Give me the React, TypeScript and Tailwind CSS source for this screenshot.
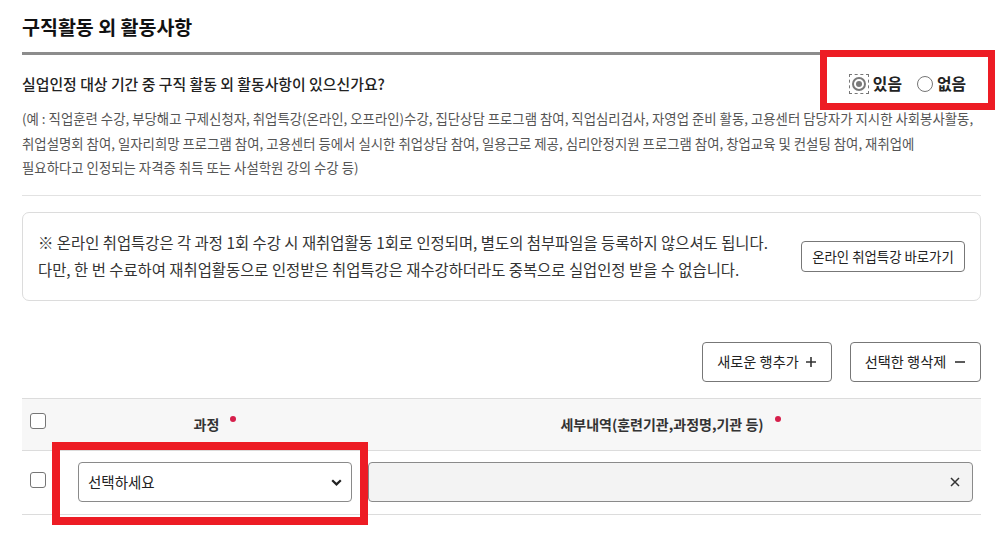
import React from "react";

const descLines = [
  "(예 : 직업훈련 수강, 부당해고 구제신청자, 취업특강(온라인, 오프라인)수강, 집단상담 프로그램 참여, 직업심리검사, 자영업 준비 활동, 고용센터 담당자가 지시한 사회봉사활동,",
  "취업설명회 참여, 일자리희망 프로그램 참여, 고용센터 등에서 실시한 취업상담 참여, 일용근로 제공, 심리안정지원 프로그램 참여, 창업교육 및 컨설팅 참여, 재취업에",
  "필요하다고 인정되는 자격증 취득 또는 사설학원 강의 수강 등)",
];

const Checkbox: React.FC<{ className?: string }> = ({ className }) => (
  <span
    className={`block h-[16px] w-[16px] rounded-[3px] border border-[#767676] bg-white ${className || ""}`}
  />
);

const RequiredDot = () => (
  <span className="ml-[11px] mb-[10px] inline-block h-[6px] w-[6px] rounded-full bg-[#d61f4b]" />
);

const RadioOption: React.FC<{ label: string; checked?: boolean }> = ({ label, checked }) => (
  <label className="flex items-center">
    {checked ? (
      <span className="flex h-[20px] w-[20px] items-center justify-center border border-dashed border-[#777]">
        <span className="flex h-[14px] w-[14px] items-center justify-center rounded-full border-2 border-[#7a7a7a]">
          <span className="h-[6px] w-[6px] rounded-full bg-[#7a7a7a]" />
        </span>
      </span>
    ) : (
      <span className="block h-[16px] w-[16px] rounded-full border border-[#767676] bg-white" />
    )}
    <span className="ml-[4px] text-[15.8px] font-semibold leading-[24px] text-[#222]">{label}</span>
  </label>
);

export default function App() {
  return (
    <div className="relative h-[533px] w-[1000px] overflow-hidden bg-white pl-[22px] pr-[19px] font-['Noto_Sans_CJK_KR',sans-serif] text-[#222]">
      {/* 제목 */}
      <h2 className="pt-[13px] text-[19.5px] font-bold leading-[28px] text-[#111]">구직활동 외 활동사항</h2>
      <div className="mt-[11px] h-[3px] bg-[#8c8c8c]" />

      {/* 질문 + 라디오 */}
      <div className="mt-[17px] flex items-center justify-between">
        <p className="text-[14.9px] font-medium leading-[24px] text-[#222]">
          실업인정 대상 기간 중 구직 활동 외 활동사항이 있으신가요?
        </p>
        <div className="mr-[15px] flex items-center gap-[15px]">
          <RadioOption label="있음" checked />
          <RadioOption label="없음" />
        </div>
      </div>

      <div className="mt-[10px] text-[13.4px] leading-[24.5px] text-[#555]">
        {descLines.map((line) => (
          <p key={line} className="whitespace-nowrap">
            {line}
          </p>
        ))}
      </div>

      <div className="mt-[15px] h-px bg-[#e2e2e2]" />

      {/* 안내 박스 */}
      <div className="mt-[16px] flex h-[89px] items-center justify-between rounded-[7px] border border-[#dcdcdc] pl-[15px] pr-[15px]">
        <div className="whitespace-nowrap text-[15.4px] leading-[27px] text-[#333]">
          <p>※ 온라인 취업특강은 각 과정 1회 수강 시 재취업활동 1회로 인정되며, 별도의 첨부파일을 등록하지 않으셔도 됩니다.</p>
          <p>다만, 한 번 수료하여 재취업활동으로 인정받은 취업특강은 재수강하더라도 중복으로 실업인정 받을 수 없습니다.</p>
        </div>
        <button className="h-[31px] w-[164px] shrink-0 rounded-[4px] border border-[#777] bg-white text-[13.4px] text-[#222]">
          온라인 취업특강 바로가기
        </button>
      </div>

      {/* 행 추가/삭제 */}
      <div className="mt-[41px] flex justify-end gap-[18px]">
        <button className="flex h-[40px] w-[130px] items-center justify-center gap-[6px] rounded-[4px] border border-[#777] bg-white text-[14.2px] text-[#222]">
          새로운 행추가
          <svg width="12" height="12" viewBox="0 0 12 12" className="text-[#333]">
            <path d="M6 1v10M1 6h10" stroke="currentColor" strokeWidth="1.6" />
          </svg>
        </button>
        <button className="flex h-[40px] w-[131px] items-center justify-center gap-[8px] rounded-[4px] border border-[#777] bg-white text-[14.2px] text-[#222]">
          선택한 행삭제
          <svg width="12" height="12" viewBox="0 0 12 12" className="text-[#333]">
            <path d="M1 6h10" stroke="currentColor" strokeWidth="1.6" />
          </svg>
        </button>
      </div>

      {/* 표 */}
      <div className="mt-[16px] border-t border-[#dcdcdc]">
        <div className="grid h-[52px] grid-cols-[48px_290px_1fr] items-center border-b border-[#dcdcdc] bg-[#f7f7f7]">
          <div className="pl-[8px]">
            <Checkbox className="mb-[6px]" />
          </div>
          <div className="flex items-center justify-center text-[14px] font-bold text-[#333]">
            과정
            <RequiredDot />
          </div>
          <div className="flex items-center justify-center text-[14px] font-bold text-[#333]">
            세부내역(훈련기관,과정명,기관 등)
            <RequiredDot />
          </div>
        </div>
        <div className="grid h-[64px] grid-cols-[48px_290px_1fr] items-center border-b border-[#dcdcdc]">
          <div className="pl-[8px]">
            <Checkbox className="mb-[5px]" />
          </div>
          <div className="px-[8px]">
            <div className="flex h-[40px] items-center justify-between rounded-[4px] border border-[#8a8a8a] bg-white pl-[9px] pr-[9px]">
              <span className="text-[14.5px] text-[#222]">선택하세요</span>
              <svg width="11" height="7" viewBox="0 0 11 7" className="text-[#222]">
                <path d="M1.2 1.2 5.5 5.4 9.8 1.2" fill="none" stroke="currentColor" strokeWidth="2.2" />
              </svg>
            </div>
          </div>
          <div className="pl-[8px] pr-[8px]">
            <div className="flex h-[40px] items-center justify-end rounded-[4px] border border-[#8a8a8a] bg-[#f3f3f3] pr-[12px]">
              <svg width="10" height="10" viewBox="0 0 10 10" className="text-[#333]">
                <path d="M1 1l8 8M9 1 1 9" stroke="currentColor" strokeWidth="1.5" />
              </svg>
            </div>
          </div>
        </div>
      </div>

      {/* 강조 표시 */}
      <div className="pointer-events-none absolute left-[820px] top-[50px] h-[60px] w-[175px] border-[7px] border-[#ed1c24]" />
      <div className="pointer-events-none absolute left-[52px] top-[442px] h-[83px] w-[316px] border-[8px] border-[#ed1c24]" />
    </div>
  );
}
